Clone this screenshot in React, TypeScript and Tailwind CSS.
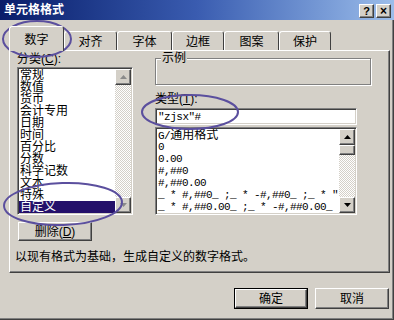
import React from "react";

const raised =
  "border border-t-white border-l-white border-r-[#404040] border-b-[#404040] shadow-[inset_-1px_-1px_#808080]";
const sunken =
  "border border-t-[#808080] border-l-[#808080] border-r-white border-b-white shadow-[inset_1px_1px_#404040,inset_-1px_-1px_#d4d0c8]";
const checker =
  "bg-[image:repeating-conic-gradient(#ffffff_0%_25%,#d4d0c8_0%_50%)] bg-[length:2px_2px]";

const categories = ["常规", "数值", "货币", "会计专用", "日期", "时间", "百分比", "分数", "科学记数", "文本", "特殊", "自定义"];

const formats = [
  "0",
  "0.00",
  "#,##0",
  "#,##0.00",
  '_ * #,##0_ ;_ * -#,##0_ ;_ * "-"_ ;_ @_ ',
  '_ * #,##0.00_ ;_ * -#,##0.00_ ;_ * "-"??_ ;_ @_ ',
];

const tabs = [
  { label: "对齐", w: "w-[53px]" },
  { label: "字体", w: "w-[55px]" },
  { label: "边框", w: "w-[52px]" },
  { label: "图案", w: "w-[55px]" },
  { label: "保护", w: "w-[52px]" },
];

function Arrow({ up, off }: { up?: boolean; off?: boolean }) {
  return (
    <div className={`flex h-[16px] w-[16px] shrink-0 items-center justify-center bg-[#d4d0c8] ${raised}`}>
      <svg width="7" height="4" viewBox="0 0 7 4">
        <polygon points={up ? "3.5,0 7,4 0,4" : "0,0 7,0 3.5,4"} fill={off ? "#8a8a8a" : "#000"} />
      </svg>
    </div>
  );
}

function Btn({ children, main, className = "" }: { children: React.ReactNode; main?: boolean; className?: string }) {
  return (
    <div className={`${main ? "border border-black" : ""} ${className}`}>
      <div className={`flex h-full w-full items-center justify-center bg-[#d4d0c8] ${raised}`}>{children}</div>
    </div>
  );
}

export default function App() {
  return (
    <div className="relative h-[320px] w-[394px] overflow-hidden bg-[#d4d0c8] font-['Liberation_Sans','Noto_Sans_CJK_SC',sans-serif] text-[12px] leading-[12px] text-black shadow-[inset_-1px_-1px_#404040,inset_-2px_-2px_#808080]">
      {/* title bar */}
      <div className="flex h-[20px] items-center bg-linear-to-r from-[#0a1c6a] via-[#3a5cb0] to-[#9cbdea] pl-[4px] pr-[3px]">
        <span className="font-bold text-white">单元格格式</span>
        <div className="ml-auto flex gap-[2px] pt-[2px]">
          <Btn className="h-[14px] w-[15px]">
            <span className="text-[11px] leading-[11px] font-bold">?</span>
          </Btn>
          <Btn className="h-[14px] w-[15px]">
            <span className="text-[12px] leading-[11px] font-bold">×</span>
          </Btn>
        </div>
      </div>

      {/* tabs */}
      <div className="flex h-[30px] items-end pl-[9px]">
        <div className="relative z-10 -mb-px flex h-[25px] w-[55px] items-center justify-center rounded-t-[3px] border-t border-l border-r border-t-white border-l-white border-r-[#404040] bg-[#d4d0c8] pt-px">
          数字
        </div>
        {tabs.map((t) => (
          <div
            key={t.label}
            className={`flex h-[19px] ${t.w} items-center justify-center rounded-t-[3px] border-t border-l border-r border-t-white border-l-white border-r-[#404040] pt-[2px]`}
          >
            {t.label}
          </div>
        ))}
      </div>

      {/* panel */}
      <div className="ml-[9px] flex h-[223px] w-[381px] flex-col border border-t-white border-l-white border-r-[#404040] border-b-[#404040] pl-[5px] shadow-[inset_-1px_-1px_#808080]">
        <div className="flex">
          {/* left column */}
          <div className="ml-[2px] flex w-[116px] flex-col pt-px">
            <div className="leading-[14px]">
              分类(<u>C</u>):
            </div>
            <div className={`mt-px flex h-[148px] bg-white ${sunken} p-px`}>
              <div className="flex-1 overflow-hidden">
                {categories.map((c) => (
                  <div
                    key={c}
                    className={`h-[12px] pl-px whitespace-nowrap ${c === "自定义" ? "bg-[#24106a] text-white" : ""}`}
                  >
                    {c}
                  </div>
                ))}
              </div>
              <div className={`flex w-[16px] flex-col ${checker}`}>
                <Arrow up off />
                <div className="flex-1" />
                <Arrow off />
              </div>
            </div>
            <Btn className="mt-[7px] ml-px h-[19px] w-[74px]">
              删除(<u>D</u>)
            </Btn>
          </div>

          {/* right column */}
          <div className="ml-[22px] flex w-[216px] flex-col">
            <div className="relative mt-[7px] h-[27px] border border-[#808080] shadow-[inset_1px_1px_#fff,1px_1px_#fff]">
              <span className="absolute -top-[7px] left-[5px] bg-[#d4d0c8] px-px leading-[12px]">示例</span>
            </div>
            <div className="mt-[7px] leading-[14px]">
              类型(<u>T</u>):
            </div>
            <div className={`mt-[2px] flex h-[17px] w-[202px] items-center bg-white ${sunken} pl-[2px] font-['Liberation_Mono',monospace] text-[11px] tracking-[-0.5px]`}>
              "zjsx"#
            </div>
            <div className={`mt-[2px] flex h-[88px] w-[202px] bg-white ${sunken} p-px`}>
              <div className="flex-1 overflow-hidden">
                <div className="h-[12px] whitespace-nowrap pl-px">
                  <span className="font-['Liberation_Mono',monospace] text-[11px] tracking-[-0.5px]">G/</span>通用格式
                </div>
                {formats.map((f) => (
                  <div
                    key={f}
                    className="h-[12px] whitespace-pre pl-px font-['Liberation_Mono',monospace] text-[11px] leading-[12px] tracking-[-0.6px]"
                  >
                    {f}
                  </div>
                ))}
              </div>
              <div className={`flex w-[16px] flex-col ${checker}`}>
                <Arrow up />
                <div className={`h-[10px] w-[16px] bg-[#d4d0c8] ${raised}`} />
                <div className="flex-1" />
                <Arrow />
              </div>
            </div>
          </div>
        </div>
        <div className="mt-[9px] leading-[14px]">以现有格式为基础，生成自定义的数字格式。</div>
      </div>

      {/* buttons */}
      <div className="mt-[15px] flex justify-end gap-[7px] pr-[5px]">
        <Btn main className="h-[21px] w-[74px]">
          确定
        </Btn>
        <Btn className="h-[21px] w-[74px]">取消</Btn>
      </div>

      {/* hand-drawn marks */}
      <svg className="pointer-events-none absolute inset-0" width="394" height="320" viewBox="0 0 394 320">
        <g fill="none" stroke="#5b4f9e" strokeWidth="2">
          <ellipse cx="37" cy="39" rx="34" ry="18" />
          <ellipse cx="190" cy="112" rx="48" ry="17" />
          <ellipse cx="63" cy="204" rx="59" ry="21" transform="rotate(-2 63 204)" />
        </g>
      </svg>
    </div>
  );
}
